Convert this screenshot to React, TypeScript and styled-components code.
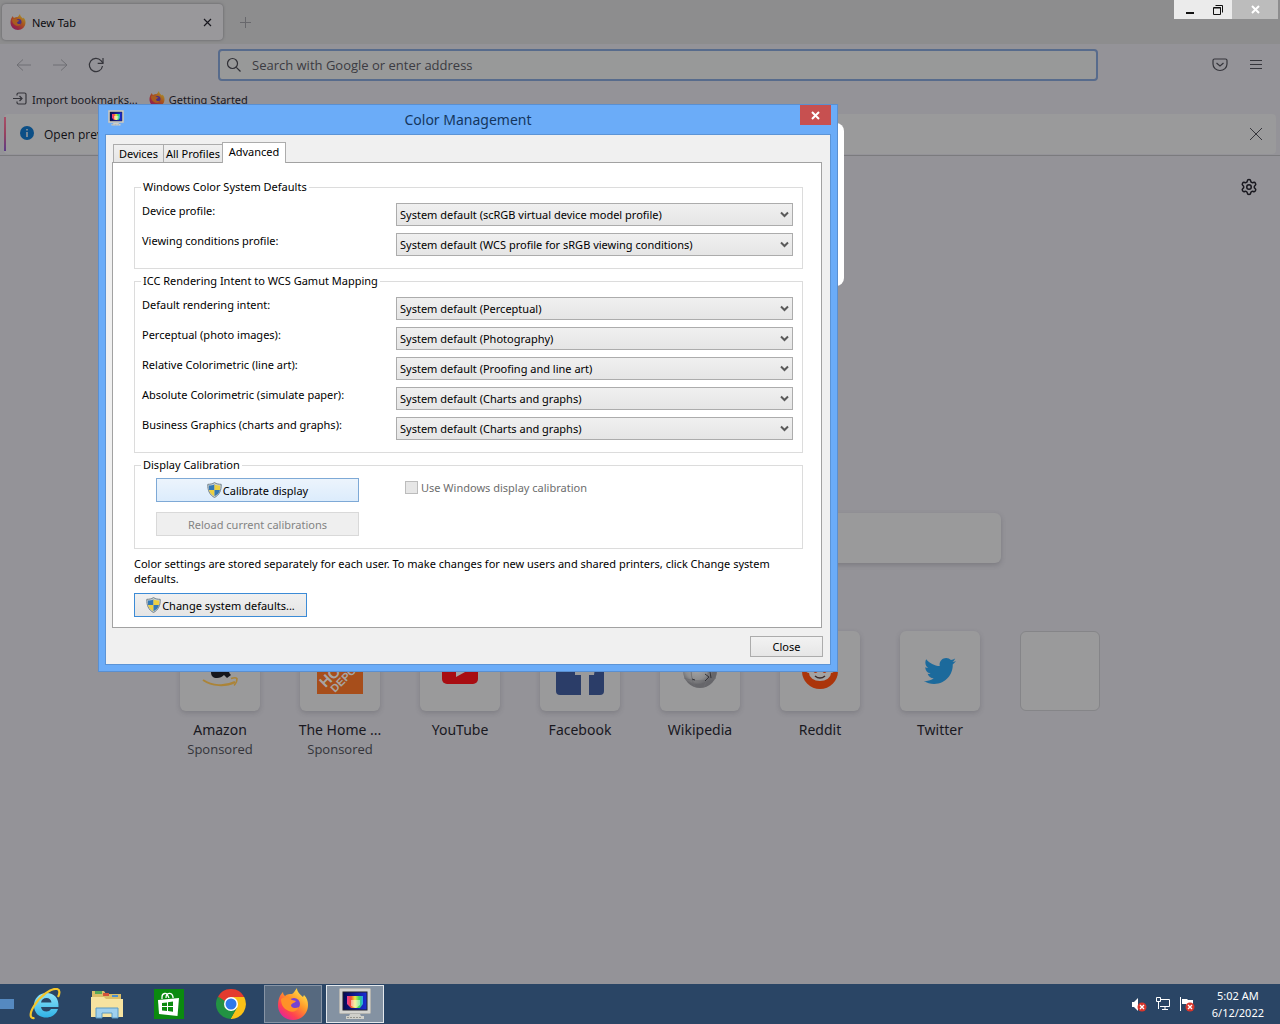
import React from "react";
import styled, { createGlobalStyle } from "styled-components";
import { FaTwitter } from "react-icons/fa";
import { Settings } from "lucide-react";

const GlobalStyle = createGlobalStyle`
  *, *::before, *::after { box-sizing: border-box; }
  body { margin: 0; background: #949398; }
  body, button, input, select { font-family: "Noto Sans", "Open Sans", sans-serif; font-size: 11px; }
  button { margin: 0; padding: 0; border: 0; background: none; color: inherit; }
`;

/* ---------- desktop ---------- */

const Desktop = styled.div`
  position: relative;
  display: flex;
  flex-direction: column;
  min-height: 100vh;
  overflow: hidden;
`;

/* ---------- browser ---------- */

const Browser = styled.div`
  flex: 1;
  display: flex;
  flex-direction: column;
  background: #949398;
  color: #19181f;
`;

const TabStrip = styled.div`
  display: flex;
  align-items: flex-start;
  height: 44px;
  background: #8d8d8e;
`;

const BrowserTab = styled.div`
  display: flex;
  align-items: center;
  gap: 6px;
  width: 221px;
  height: 36px;
  margin: 4px 0 0 2px;
  padding: 0 8px;
  border-radius: 4px;
  background: #99989b;
  box-shadow: 0 0 3px #5e5e62;
  color: #0c0c10;
`;

const TabTitle = styled.span`
  flex: 1;
`;

const IconButton = styled.button<{ $w: number; $h: number }>`
  display: flex;
  align-items: center;
  justify-content: center;
  width: ${(p) => p.$w}px;
  height: ${(p) => p.$h}px;
`;

const NewTabButton = styled(IconButton)`
  margin-top: 6px;
  margin-left: 6px;
`;

const WindowControls = styled.div`
  display: flex;
  height: 19px;
  margin-left: auto;
  margin-right: 2px;
  padding-left: 2px;
  background: #ebebeb;
`;

const WindowButton = styled.button<{ $close?: boolean }>`
  display: flex;
  align-items: center;
  justify-content: center;
  width: ${(p) => (p.$close ? 46 : 28)}px;
  background: ${(p) => (p.$close ? "#bcbcbc" : "transparent")};
`;

const NavBar = styled.div`
  display: flex;
  align-items: center;
  height: 42px;
  padding: 0 6px;
`;

const AddressBox = styled.label`
  flex: 1;
  display: flex;
  align-items: center;
  gap: 10px;
  height: 32px;
  margin: 0 104px;
  padding: 0 6px;
  border: 2px solid #576b8c;
  border-radius: 4px;
  background: #989999;
`;

const AddressInput = styled.input`
  flex: 1;
  min-width: 0;
  border: 0;
  padding: 0;
  outline: 0;
  background: transparent;
  font-family: "Open Sans", "Noto Sans", sans-serif;
  font-size: 13px;
  color: #19181f;
  &::placeholder { color: #3b3b42; opacity: 1; }
`;

const BookmarksBar = styled.nav`
  display: flex;
  align-items: center;
  gap: 11px;
  height: 26px;
  padding: 0 12px;
`;

const Bookmark = styled.a`
  display: flex;
  align-items: center;
  gap: 4px;
  color: #19181f;
  text-decoration: none;
`;

const Notice = styled.div`
  display: flex;
  align-items: center;
  height: 40px;
  margin: 2px 4px 1px;
  padding-right: 2px;
  border-radius: 4px;
  background: #9a9a9b;
  color: #0f0f14;
`;

const NoticeAccent = styled.div`
  width: 2px;
  height: 34px;
  margin-right: 13px;
  background: linear-gradient(#a85068, #96425f 50%, #5c3c88);
`;

const NoticeText = styled.span`
  flex: 1;
  margin-left: 9px;
  font-family: "Open Sans", "Noto Sans", sans-serif;
  font-size: 12px;
`;

const NewTabPage = styled.main`
  flex: 1;
  border-top: 1px solid #7b7b7e;
  padding: 13px 13px 0;
`;

const SettingsRow = styled.div`
  display: flex;
  justify-content: flex-end;
`;

const PageSearch = styled.div`
  width: 722px;
  max-width: 100%;
  height: 50px;
  margin: 308px auto 68px;
  border-radius: 6px;
  background: #9a9a9b;
  box-shadow: 0 2px 5px rgba(50, 50, 60, 0.25);
`;

const Shortcuts = styled.div`
  display: flex;
  justify-content: center;
`;

const Shortcut = styled.a`
  display: flex;
  flex-direction: column;
  align-items: center;
  width: 120px;
  color: #19181f;
  text-decoration: none;
`;

const ShortcutTile = styled.span<{ $empty?: boolean }>`
  display: flex;
  align-items: center;
  justify-content: center;
  width: 80px;
  height: 80px;
  margin-bottom: 9px;
  border-radius: 6px;
  background: #9a9a9b;
  border: ${(p) => (p.$empty ? "1px solid #858588" : "0")};
  box-shadow: ${(p) => (p.$empty ? "none" : "0 2px 5px rgba(50, 50, 60, 0.22)")};
`;

const ShortcutName = styled.span`
  font-size: 14px;
  line-height: 20px;
`;

const ShortcutNote = styled.span`
  font-family: "Open Sans", "Noto Sans", sans-serif;
  font-size: 13px;
  line-height: 18px;
  color: #33333a;
`;

/* White popup lying over the page, mostly hidden by the dialog */
const Popup = styled.div`
  position: absolute;
  left: 480px;
  top: 123px;
  width: 364px;
  height: 163px;
  border-radius: 8px;
  background: #ffffff;
`;

/* ---------- dialog ---------- */

const Dialog = styled.section`
  position: absolute;
  left: 98px;
  top: 104px;
  width: 740px;
  padding: 0 6px 6px;
  border: 1px solid #5a8fd0;
  background: #6bacf8;
  color: #000000;
`;

const DialogTitleBar = styled.header`
  display: grid;
  grid-template-columns: 31px 1fr 31px;
  height: 29px;
`;

const DialogIcon = styled.span`
  padding: 5px 0 0 3px;
`;

const DialogTitle = styled.h1`
  margin: 0;
  font-size: 14px;
  font-weight: 400;
  line-height: 29px;
  text-align: center;
  color: #14365e;
`;

const DialogClose = styled.button`
  display: flex;
  align-items: center;
  justify-content: center;
  height: 20px;
  background: #c75050;
`;

const DialogBody = styled.div`
  border: 1px solid #5c94d6;
  padding: 6px 8px 7px 6px;
  background: #f0f0f0;
`;

const TabList = styled.div`
  display: flex;
  align-items: flex-end;
  height: 21px;
  padding-left: 1px;
`;

const Tab = styled.button<{ $active?: boolean; $w: number }>`
  width: ${(p) => p.$w}px;
  height: ${(p) => (p.$active ? 21 : 18)}px;
  margin-bottom: ${(p) => (p.$active ? -1 : 0)}px;
  margin-right: ${(p) => (p.$active ? 0 : -1)}px;
  padding-bottom: ${(p) => (p.$active ? 3 : 0)}px;
  border: 1px solid #acacac;
  border-bottom: 0;
  background: ${(p) => (p.$active ? "#ffffff" : "linear-gradient(#f0f0f0, #e5e5e5)")};
  line-height: 16px;
  white-space: nowrap;
  z-index: ${(p) => (p.$active ? 1 : 0)};
`;

const TabPanel = styled.div`
  padding: 16px 18px 10px 21px;
  border: 1px solid #a2a2a2;
  background: #ffffff;
`;

const Group = styled.fieldset`
  min-width: 0;
  margin: 0 0 4px;
  padding: 8px 9px 12px 7px;
  border: 1px solid #dcdcdc;
`;

const GroupTitle = styled.legend`
  margin-left: -1px;
  padding: 0 2px;
  line-height: 16px;
`;

const Field = styled.div`
  display: grid;
  grid-template-columns: 254px 1fr;
  align-items: start;
  & + & { margin-top: 7px; }
`;

const FieldLabel = styled.label`
  line-height: 16px;
`;

const SelectBox = styled.span`
  display: grid;
  align-items: center;
  & > * { grid-area: 1 / 1; }
  & > svg { justify-self: end; margin-right: 4px; pointer-events: none; }
`;

const Select = styled.select`
  appearance: none;
  width: 100%;
  height: 23px;
  padding: 0 20px 0 3px;
  border: 1px solid #acacac;
  border-radius: 0;
  background: linear-gradient(#f0f0f0, #e5e5e5);
  color: #000000;
`;

const CalibrationGroup = styled(Group)`
  margin-bottom: 7px;
  padding-top: 5px;
`;

const CalibrationGrid = styled.div`
  display: grid;
  grid-template-columns: 203px 1fr;
  column-gap: 46px;
  row-gap: 10px;
  padding-left: 14px;
`;

type ButtonKind = "normal" | "hot" | "default" | "disabled";

const kindBorder: Record<ButtonKind, string> = {
  normal: "#acacac",
  hot: "#7ea9d6",
  default: "#3c8bd6",
  disabled: "#d9d9d9",
};
const kindFill: Record<ButtonKind, string> = {
  normal: "linear-gradient(#f2f2f2, #e6e6e6)",
  hot: "linear-gradient(#ecf4fc, #dcecfc)",
  default: "linear-gradient(#f0f0f0, #e5e5e5)",
  disabled: "#efefef",
};

const PushButton = styled.button<{ $kind: ButtonKind; $w?: number; $h?: number }>`
  display: flex;
  align-items: center;
  justify-content: center;
  gap: 1px;
  width: ${(p) => (p.$w ? `${p.$w}px` : "100%")};
  height: ${(p) => p.$h ?? 24}px;
  border: 1px solid ${(p) => kindBorder[p.$kind]};
  background: ${(p) => kindFill[p.$kind]};
  color: ${(p) => (p.$kind === "disabled" ? "#838383" : "#000000")};
`;

const CheckLabel = styled.label`
  display: flex;
  align-items: center;
  gap: 3px;
  height: 18px;
  color: #6d6d6d;
`;

const CheckBox = styled.input`
  appearance: none;
  width: 13px;
  height: 13px;
  margin: 0;
  border: 1px solid #bcbcbc;
  background: #e6e6e6;
`;

const Hint = styled.p`
  margin: 0 0 7px;
  line-height: 15px;
`;

const DialogFooter = styled.footer`
  display: flex;
  justify-content: flex-end;
  padding-top: 8px;
  margin-right: -1px;
`;

/* ---------- taskbar ---------- */

const Taskbar = styled.footer`
  display: flex;
  align-items: center;
  height: 40px;
  background: #2a4565;
  color: #ffffff;
`;

const PeekBar = styled.span`
  width: 14px;
  height: 10px;
  margin-right: 2px;
  background: #5589c0;
`;

const TaskButton = styled.button<{ $state?: "open" | "active" }>`
  display: flex;
  align-items: center;
  justify-content: center;
  width: 58px;
  height: 38px;
  margin-right: 4px;
  border: 1px solid ${(p) => (p.$state === "active" ? "#e4e8ec" : p.$state === "open" ? "#8794a5" : "transparent")};
  background: ${(p) => (p.$state === "active" ? "#8492a2" : p.$state === "open" ? "#56697f" : "transparent")};
`;

const Tray = styled.div`
  display: flex;
  align-items: center;
  gap: 8px;
  margin-left: auto;
  padding-right: 16px;
`;

const Clock = styled.time`
  margin-left: 9px;
  line-height: 17px;
  text-align: center;
`;

/* ---------- drawings ---------- */

const Firefox = ({ size, dim }: { size: number; dim?: boolean }) => {
  const id = dim ? "ffDim" : "ffLit";
  return (
    <svg width={size} height={size} viewBox="0 0 32 32" aria-hidden="true">
      <defs>
        <linearGradient id={id} x1="0.85" y1="0.1" x2="0.2" y2="0.95">
          <stop offset="0" stopColor={dim ? "#a8922e" : "#ffe34a"} />
          <stop offset="0.4" stopColor={dim ? "#a8561e" : "#ff9529"} />
          <stop offset="0.75" stopColor={dim ? "#9a2b3c" : "#ff4250"} />
          <stop offset="1" stopColor={dim ? "#861f5c" : "#e5249a"} />
        </linearGradient>
      </defs>
      <path d="M3 8C4 6 5 5 6 4c0 2 1 3 2 4 2-2 5-2 7-2 2-1 3-4 5-6 0 4 3 6 6 9l1-2c3 3 4 6 4 10 0 9-7 15-15 15S1 26 1 17c0-4 1-7 2-9Z" fill={`url(#${id})`} />
      <circle cx="17" cy="16" r="6" fill={dim ? "#4b2f80" : "#7542d0"} />
      <path d="M4 11c4-3 8-2 11 1l4 1c-1 2-4 2-5 4 0 3 4 4 8 2-2 5-8 6-12 3-4-2-6-6-6-11Z" fill={dim ? "#a85c20" : "#ff9128"} />
    </svg>
  );
};

const Monitor = ({ size }: { size: number }) => {
  const id = `scr${size}`;
  return (
    <svg width={size} height={size} viewBox="0 0 32 32" aria-hidden="true">
      <defs>
        <linearGradient id={id}>
          <stop offset="0" stopColor="#f03c9c" />
          <stop offset="0.25" stopColor="#f04a30" />
          <stop offset="0.5" stopColor="#f2e640" />
          <stop offset="0.75" stopColor="#38d85c" />
          <stop offset="1" stopColor="#28a8f0" />
        </linearGradient>
        <linearGradient id={`${id}b`}>
          <stop offset="0" stopColor="#050850" />
          <stop offset="1" stopColor="#1c2ed8" />
        </linearGradient>
      </defs>
      <rect x="0.5" y="0.5" width="31" height="25" rx="1" fill="#d4d4d0" stroke="#b4b4b0" />
      <rect x="4" y="4" width="24" height="18" fill={`url(#${id}b)`} stroke="#20202c" />
      <path d="M8 8h16v8l-3 4h-9l-4-4Z" fill={`url(#${id})`} />
      <path d="M12 12h9v5l-4 3-5-2Z" fill="#ffffff" opacity="0.5" />
      <path d="M11 26h10l1 2h3v3H7v-3h3Z" fill="#cfcfca" />
      <path d="M8 29.500h14" stroke="#96968f" strokeDasharray="2 1" />
    </svg>
  );
};

const Shield = () => (
  <svg width="15" height="16" viewBox="0 0 15 16" aria-hidden="true">
    <path d="M7.500 .6C9.500 2 12 2.300 14.200 2.300 14.500 8 12.500 13 7.500 15.500 2.500 13 .5 8 .8 2.300 3 2.300 5.500 2 7.500 .6Z" fill="#c9d2d6" stroke="#76848c" />
    <path d="M7.500 2.200V8H2.100C1.900 6.600 1.800 5 1.900 3.500 4 3.500 6 3.200 7.500 2.200Z" fill="#3478b4" />
    <path d="M7.500 2.200C9 3.200 11 3.500 13.100 3.500 13.200 5 13.100 6.600 12.900 8H7.500Z" fill="#ecd040" />
    <path d="M2.100 8H7.500V14.200C4.600 12.900 2.700 11 2.100 8Z" fill="#ecd040" />
    <path d="M7.500 8H12.900C12.300 11 10.400 12.900 7.500 14.200Z" fill="#3478b4" />
  </svg>
);

const Cross = ({ size, color, width = 1 }: { size: number; color: string; width?: number }) => (
  <svg width={size} height={size} viewBox={`0 0 ${size} ${size}`} aria-hidden="true">
    <path d={`M1 1 ${size - 1} ${size - 1}M${size - 1} 1 1 ${size - 1}`} stroke={color} strokeWidth={width} />
  </svg>
);

const Arrow = ({ flip }: { flip?: boolean }) => (
  <svg width="16" height="16" viewBox="0 0 16 16" fill="none" stroke="#6f6f74" aria-hidden="true">
    <path d={flip ? "M1 8h14M9 2.500l6 5.500-6 5.500" : "M15 8H1M7 2.500 1 8l6 5.500"} />
  </svg>
);

const Chevron = () => (
  <svg width="9" height="7" viewBox="0 0 9 7" fill="none" stroke="#5a5a5a" strokeWidth="2" aria-hidden="true">
    <path d="M1 1.500l3.500 3.500L8 1.500" />
  </svg>
);

const AmazonLogo = () => (
  <svg width="40" height="40" viewBox="0 0 40 40" aria-hidden="true">
    <path d="M13 12c0-5 3-7 8-7s8 2 8 7v8c0 2 1 3 2 4l-4 3c-1-1-2-2-3-3-2 2-4 3-7 3-4 0-6-2-6-6 0-5 4-7 12-7" fill="#15161c" />
    <path d="M3 29c9 6 22 7 32 2" fill="none" stroke="#ab8438" strokeWidth="2" />
    <path d="M31 27.500c3-1 5-1 6 0 0 2-1 5-3 7" fill="none" stroke="#ab8438" strokeWidth="1.500" />
  </svg>
);

const HomeDepotLogo = () => (
  <svg width="46" height="46" viewBox="0 0 46 46" aria-hidden="true">
    <rect width="46" height="46" fill="#a74e1b" />
    <g fill="#a7a5a4" fontFamily="Liberation Sans, sans-serif" fontWeight="700" textAnchor="middle" transform="rotate(-45 23 23)">
      <text x="23" y="12" fontSize="8">THE</text>
      <text x="23" y="25" fontSize="15">HOME</text>
      <text x="23" y="35" fontSize="11">DEPOT</text>
    </g>
  </svg>
);

const YouTubeLogo = () => (
  <svg width="36" height="25" viewBox="0 0 36 25" aria-hidden="true">
    <rect width="36" height="25" rx="5" fill="#a80d12" />
    <path d="m14 7 10 5.500-10 5.500Z" fill="#a3a3a4" />
  </svg>
);

const FacebookLogo = () => (
  <svg width="48" height="48" viewBox="0 0 48 48" aria-hidden="true">
    <rect width="48" height="48" rx="4" fill="#2b3d68" />
    <path d="M25 48V28h-6v-7h6v-5c0-6 4-10 10-10h5v7h-4c-3 0-4 1-4 4v4h7l-1 7h-5v20Z" fill="#9a9a9b" />
  </svg>
);

const WikipediaLogo = () => (
  <svg width="36" height="36" viewBox="0 0 36 36" aria-hidden="true">
    <defs>
      <radialGradient id="wiki" cx="0.4" cy="0.4">
        <stop offset="0" stopColor="#a9a9a9" />
        <stop offset="0.7" stopColor="#8d8d8e" />
        <stop offset="1" stopColor="#66666a" />
      </radialGradient>
    </defs>
    <circle cx="18" cy="18" r="17" fill="url(#wiki)" />
    <path d="M12 2c-4 10-4 22 1 32M24 2c4 10 3 22-2 32M1 13c10 4 24 4 34 0M2 25c10 4 22 4 32 0" fill="none" stroke="#6c6c70" strokeWidth="0.800" />
    <path d="M10 26l3 1M23 21l4 3-4 4M28 19l1 6" fill="none" stroke="#333338" />
  </svg>
);

const RedditLogo = () => (
  <svg width="36" height="36" viewBox="0 0 36 36" aria-hidden="true">
    <circle cx="18" cy="18" r="18" fill="#ab350b" />
    <circle cx="7" cy="17" r="3" fill="#a3a3a4" />
    <circle cx="29" cy="17" r="3" fill="#a3a3a4" />
    <ellipse cx="18" cy="20" rx="11" ry="8" fill="#a3a3a4" />
    <circle cx="13.500" cy="18" r="2" fill="#ab350b" />
    <circle cx="22.500" cy="18" r="2" fill="#ab350b" />
    <path d="M13 23c3 2.500 7 2.500 10 0" fill="none" stroke="#3a2a28" strokeWidth="1.500" />
  </svg>
);

const InternetExplorer = () => (
  <svg width="32" height="32" viewBox="0 0 32 32" fill="none" aria-hidden="true">
    <defs>
      <linearGradient id="ie" x1="0" y1="0" x2="0" y2="1">
        <stop offset="0" stopColor="#8fe4fa" />
        <stop offset="1" stopColor="#2fb2e6" />
      </linearGradient>
    </defs>
    <path d="M29.500 19H12c.5 3 2.500 4.500 5.500 4.500 2 0 3.500-.8 4.500-2.500h7c-2 5.500-6 8.500-12 8.500C9.500 29.500 5 24.500 5 17.500S10 5 17.500 5C25.500 5 30 10.500 29.500 19ZM12 14.500h10.500c-.4-3-2.200-4.500-5-4.500-3 0-5 1.600-5.500 4.500Z" fill="url(#ie)" />
    <path d="M5.500 30C1 31 0 26 5 18 11 8 22 0 28 1c3 .6 3 4 1 8" stroke="#f4c52c" strokeWidth="2.200" />
  </svg>
);

const Explorer = () => (
  <svg width="34" height="30" viewBox="0 0 34 30" aria-hidden="true">
    <path d="M2 4V2h12l2 3h15v22H2Z" fill="#d9bd68" />
    <path d="M5 2h7v3H5Z" fill="#58a858" />
    <path d="M13 4h6v3h-6Z" fill="#d2523c" />
    <path d="M22 6h6v2h-6Z" fill="#4a90d0" />
    <path d="M1 8h13l2 2h17v18H1Z" fill="#f6e3a0" />
    <path d="M6 29V19h22v10h-6v-5H12v5Z" fill="#9fd0ee" stroke="#5a9ac4" />
  </svg>
);

const Store = () => (
  <svg width="30" height="30" viewBox="0 0 30 30" aria-hidden="true">
    <rect width="30" height="30" fill="#0b8a0f" />
    <path d="M8 10V8c0-4 5-5 6-1l1 2M12 9c0-6 6-6 7-1v1" fill="none" stroke="#ffffff" strokeWidth="1.300" />
    <path d="m4 11 21-2-1.500 18L5 25Z" fill="#ffffff" />
    <path d="m8 14 5-.6v3.700H8Zm6-.8 5-.6v4.500h-5ZM8 18h5v4l-5-.6Zm6 0h5v4.700l-5-.6Z" fill="#0b8a0f" />
  </svg>
);

const Chrome = () => (
  <svg width="30" height="30" viewBox="0 0 30 30" aria-hidden="true">
    <path d="M15 15 2 7.500A15 15 0 0 1 28 7.500Z" fill="#e33b2e" />
    <path d="M15 8H28.200A15 15 0 0 1 14.500 30L21 18.500Z" fill="#fbc116" />
    <path d="M2 7.500A15 15 0 0 0 14.500 30L21 18.500 9 18.500Z" fill="#229342" />
    <path d="M2 7.500 9 19l6-11h13.200Z" fill="#e33b2e" />
    <path d="M2 7.500 8.800 19 14 21l-5-9Z" fill="#229342" />
    <circle cx="15" cy="15" r="7" fill="#ffffff" />
    <circle cx="15" cy="15" r="5.500" fill="#2f78ea" />
  </svg>
);

const TrayBadge = ({ x, y }: { x: number; y: number }) => (
  <g>
    <circle cx={x} cy={y} r="4.500" fill="#d8362c" />
    <path d={`M${x - 2} ${y - 2}l4 4M${x + 2} ${y - 2}l-4 4`} stroke="#ffffff" strokeWidth="1.300" />
  </g>
);

const shortcuts = [
  { name: "Amazon", note: "Sponsored", logo: <AmazonLogo /> },
  { name: "The Home ...", note: "Sponsored", logo: <HomeDepotLogo /> },
  { name: "YouTube", logo: <YouTubeLogo /> },
  { name: "Facebook", logo: <FacebookLogo /> },
  { name: "Wikipedia", logo: <WikipediaLogo /> },
  { name: "Reddit", logo: <RedditLogo /> },
  { name: "Twitter", logo: <FaTwitter size={32} color="#1c6a9c" /> },
];

const wcsFields = [
  ["device", "Device profile:", "System default (scRGB virtual device model profile)"],
  ["viewing", "Viewing conditions profile:", "System default (WCS profile for sRGB viewing conditions)"],
];

const iccFields = [
  ["intent", "Default rendering intent:", "System default (Perceptual)"],
  ["perceptual", "Perceptual (photo images):", "System default (Photography)"],
  ["relative", "Relative Colorimetric (line art):", "System default (Proofing and line art)"],
  ["absolute", "Absolute Colorimetric (simulate paper):", "System default (Charts and graphs)"],
  ["business", "Business Graphics (charts and graphs):", "System default (Charts and graphs)"],
];

const FieldRow = ({ id, label, value }: { id: string; label: string; value: string }) => (
  <Field>
    <FieldLabel htmlFor={id}>{label}</FieldLabel>
    <SelectBox>
      <Select id={id} defaultValue={value}>
        <option>{value}</option>
      </Select>
      <Chevron />
    </SelectBox>
  </Field>
);

export default function App() {
  return (
    <Desktop>
      <GlobalStyle />
      <Browser>
        <TabStrip>
          <BrowserTab>
            <Firefox size={16} dim />
            <TabTitle>New Tab</TabTitle>
            <IconButton $w={16} $h={16} aria-label="Close tab"><Cross size={9} color="#19181f" width={1.2} /></IconButton>
          </BrowserTab>
          <NewTabButton $w={32} $h={32} aria-label="New tab">
            <svg width="11" height="11" viewBox="0 0 11 11" aria-hidden="true"><path d="M5.500 0v11M0 5.500h11" stroke="#68686c" /></svg>
          </NewTabButton>
          <WindowControls>
            <WindowButton aria-label="Minimize">
              <svg width="10" height="10" viewBox="0 0 10 10" aria-hidden="true"><path d="M1 8h8" stroke="#111111" strokeWidth="2" /></svg>
            </WindowButton>
            <WindowButton aria-label="Restore">
              <svg width="10" height="10" viewBox="0 0 10 10" fill="none" stroke="#111111" aria-hidden="true">
                <path d="M.5 3v6.500h7V2.500h-7M0 3h8M2.500 .5h7v7" />
              </svg>
            </WindowButton>
            <WindowButton $close aria-label="Close browser"><Cross size={9} color="#ffffff" width={2} /></WindowButton>
          </WindowControls>
        </TabStrip>

        <NavBar>
          <IconButton $w={36} $h={32} aria-label="Back"><Arrow /></IconButton>
          <IconButton $w={36} $h={32} aria-label="Forward"><Arrow flip /></IconButton>
          <IconButton $w={36} $h={32} aria-label="Reload">
            <svg width="16" height="16" viewBox="0 0 16 16" fill="none" stroke="#35353b" strokeWidth="1.200" aria-hidden="true">
              <path d="M14.500 9A6.600 6.600 0 1 1 13 3.700L15 6" /><path d="M15 1v5.300H9.700" />
            </svg>
          </IconButton>
          <AddressBox>
            <svg width="16" height="16" viewBox="0 0 16 16" fill="none" stroke="#303036" strokeWidth="1.200" aria-hidden="true">
              <circle cx="6.500" cy="6.500" r="5" /><path d="m10.300 10.300 4.200 4.200" />
            </svg>
            <AddressInput aria-label="Address" placeholder="Search with Google or enter address" />
          </AddressBox>
          <IconButton $w={36} $h={32} aria-label="Pocket">
            <svg width="16" height="16" viewBox="0 0 16 16" fill="none" stroke="#35353b" strokeWidth="1.200" aria-hidden="true">
              <path d="M2.500 2h11a1.500 1.500 0 0 1 1.500 1.500V7A7 6.500 0 0 1 1 7V3.500A1.500 1.500 0 0 1 2.500 2Z" /><path d="m4.500 6 3.500 3 3.500-3" />
            </svg>
          </IconButton>
          <IconButton $w={36} $h={32} aria-label="Menu">
            <svg width="12" height="12" viewBox="0 0 12 12" stroke="#35353b" aria-hidden="true"><path d="M0 1.500h12M0 5.500h12M0 9.500h12" /></svg>
          </IconButton>
        </NavBar>

        <BookmarksBar>
          <Bookmark href="#import">
            <svg width="16" height="16" viewBox="0 0 16 16" fill="none" stroke="#35353b" strokeWidth="1.200" aria-hidden="true">
              <path d="M5 4.500V3.500A1.500 1.500 0 0 1 6.500 2h6A1.500 1.500 0 0 1 14 3.500v8a1.500 1.500 0 0 1-1.500 1.500h-6A1.500 1.500 0 0 1 5 11.500v-1M1 7.500h9M7.500 5l2.500 2.500L7.500 10" />
            </svg>
            Import bookmarks...
          </Bookmark>
          <Bookmark href="#start"><Firefox size={16} dim />Getting Started</Bookmark>
        </BookmarksBar>

        <Notice>
          <NoticeAccent />
          <svg width="16" height="16" viewBox="0 0 16 16" aria-hidden="true">
            <circle cx="8" cy="7" r="7" fill="#0c4f86" /><path d="M8 6v5M8 3v1.500" stroke="#9a9a9b" strokeWidth="1.500" />
          </svg>
          <NoticeText>Open previous tabs?</NoticeText>
          <IconButton $w={36} $h={32} aria-label="Dismiss"><Cross size={14} color="#35353b" /></IconButton>
        </Notice>

        <NewTabPage>
          <SettingsRow>
            <IconButton $w={36} $h={36} aria-label="Page settings"><Settings size={18} color="#19181f" strokeWidth={2} /></IconButton>
          </SettingsRow>
          <PageSearch />
          <Shortcuts>
            {shortcuts.map((s) => (
              <Shortcut key={s.name} href="#site">
                <ShortcutTile>{s.logo}</ShortcutTile>
                <ShortcutName>{s.name}</ShortcutName>
                {s.note && <ShortcutNote>{s.note}</ShortcutNote>}
              </Shortcut>
            ))}
            <Shortcut href="#add" aria-label="Add shortcut"><ShortcutTile $empty /></Shortcut>
          </Shortcuts>
        </NewTabPage>
      </Browser>

      <Popup />

      <Dialog aria-labelledby="dialog-title">
        <DialogTitleBar>
          <DialogIcon><Monitor size={16} /></DialogIcon>
          <DialogTitle id="dialog-title">Color Management</DialogTitle>
          <DialogClose aria-label="Close dialog"><Cross size={9} color="#ffffff" width={2} /></DialogClose>
        </DialogTitleBar>
        <DialogBody>
          <TabList role="tablist">
            <Tab role="tab" $w={51}>Devices</Tab>
            <Tab role="tab" $w={60}>All Profiles</Tab>
            <Tab role="tab" $w={64} $active aria-selected="true">Advanced</Tab>
          </TabList>
          <TabPanel role="tabpanel">
            <Group>
              <GroupTitle>Windows Color System Defaults</GroupTitle>
              {wcsFields.map(([id, label, value]) => <FieldRow key={id} id={id} label={label} value={value} />)}
            </Group>
            <Group>
              <GroupTitle>ICC Rendering Intent to WCS Gamut Mapping</GroupTitle>
              {iccFields.map(([id, label, value]) => <FieldRow key={id} id={id} label={label} value={value} />)}
            </Group>
            <CalibrationGroup>
              <GroupTitle>Display Calibration</GroupTitle>
              <CalibrationGrid>
                <PushButton $kind="hot"><Shield />Calibrate display</PushButton>
                <CheckLabel><CheckBox type="checkbox" disabled />Use Windows display calibration</CheckLabel>
                <PushButton $kind="disabled" disabled>Reload current calibrations</PushButton>
              </CalibrationGrid>
            </CalibrationGroup>
            <Hint>
              Color settings are stored separately for each user. To make changes for new users and shared printers, click Change system defaults.
            </Hint>
            <PushButton $kind="default" $w={173}><Shield />Change system defaults...</PushButton>
          </TabPanel>
          <DialogFooter>
            <PushButton $kind="normal" $w={73} $h={21}>Close</PushButton>
          </DialogFooter>
        </DialogBody>
      </Dialog>

      <Taskbar>
        <PeekBar />
        <TaskButton aria-label="Internet Explorer"><InternetExplorer /></TaskButton>
        <TaskButton aria-label="File Explorer"><Explorer /></TaskButton>
        <TaskButton aria-label="Store"><Store /></TaskButton>
        <TaskButton aria-label="Chrome"><Chrome /></TaskButton>
        <TaskButton $state="open" aria-label="Firefox"><Firefox size={32} /></TaskButton>
        <TaskButton $state="active" aria-label="Color Management"><Monitor size={32} /></TaskButton>
        <Tray>
          <svg width="16" height="16" viewBox="0 0 16 16" aria-hidden="true">
            <path d="M1 6h2l4-4v13l-4-4H1Z" fill="#ffffff" /><TrayBadge x={11} y={11} />
          </svg>
          <svg width="16" height="16" viewBox="0 0 16 16" fill="none" stroke="#ffffff" aria-hidden="true">
            <path d="M6 3.500h8.500v7H5M7 13.500h6M10 11v2M1.500 1.500h4v4h-4ZM3.500 6v7" />
          </svg>
          <svg width="16" height="16" viewBox="0 0 16 16" aria-hidden="true">
            <path d="M1.500 1v14" stroke="#ffffff" /><path d="M3 3h5l1 1h5v6H8L7 8H3Z" fill="#ffffff" /><TrayBadge x={11} y={11} />
          </svg>
          <Clock dateTime="2022-06-12T05:02">5:02 AM<br />6/12/2022</Clock>
        </Tray>
      </Taskbar>
    </Desktop>
  );
}
